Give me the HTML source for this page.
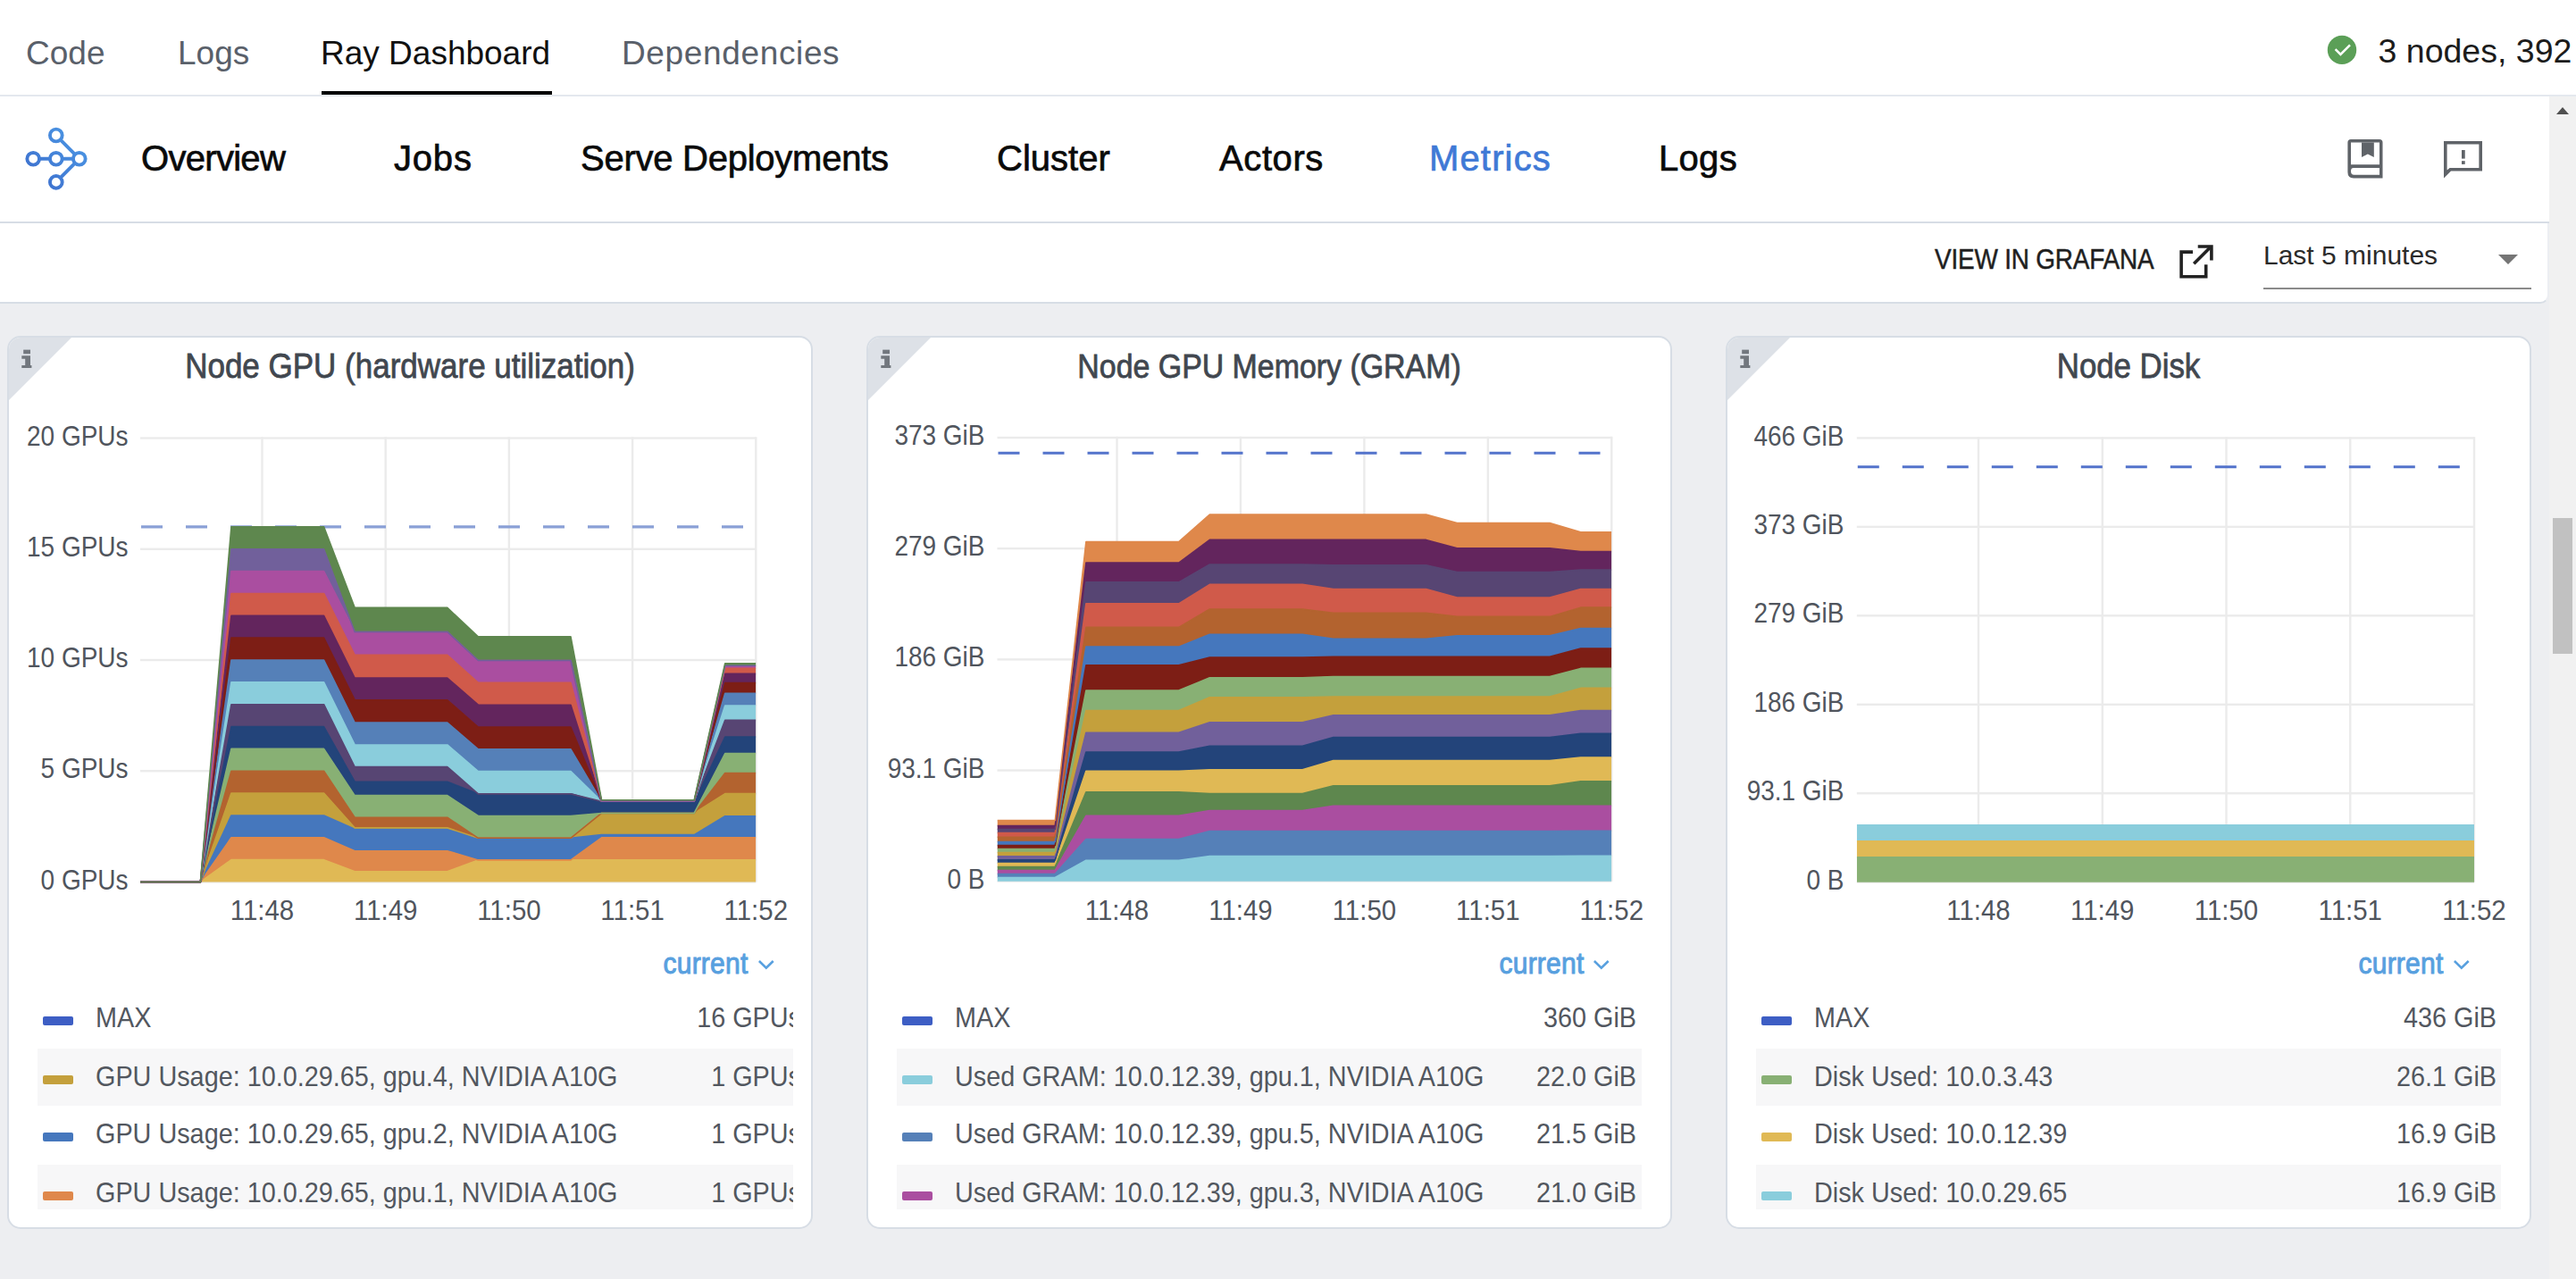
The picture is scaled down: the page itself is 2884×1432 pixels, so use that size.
<!DOCTYPE html>
<html><head><meta charset="utf-8"><style>
html,body{margin:0;padding:0;width:2884px;height:1432px;overflow:hidden;background:#fff;font-family:'Liberation Sans', sans-serif;}
</style></head><body>
<div style="position:absolute;left:0px;top:0px;width:2884px;height:106px;background:#ffffff;"></div>
<div style="position:absolute;left:0px;top:106px;width:2884px;height:2px;background:#e4e8ee;"></div>
<div style="position:absolute;left:0px;top:108px;width:2854px;height:1324px;background:#edeef1;"></div>
<div style="position:absolute;left:2854px;top:108px;width:30px;height:1324px;background:#f1f1f1;"></div>
<div style="position:absolute;left:2858px;top:580px;width:22px;height:152px;background:#c1c1c1;"></div>
<div style="position:absolute;left:2862px;top:120px;width:0;height:0;border-left:7px solid transparent;border-right:7px solid transparent;border-bottom:8px solid #505050"></div>
<div style="position:absolute;left:0px;top:108px;width:2854px;height:140px;background:#ffffff;"></div>
<div style="position:absolute;left:0px;top:248px;width:2854px;height:2px;background:#d7dde5;"></div>
<div style="position:absolute;left:-20px;top:230px;width:2870px;height:108px;background:#fff;border:2px solid #d7dde5;border-top:none;border-right-color:#eceef2;border-radius:0 0 10px 10px"></div>
<div style="position:absolute;left:0px;top:108px;width:2854px;height:140px;background:#ffffff;"></div>
<div style="position:absolute;left:0px;top:248px;width:2854px;height:2px;background:#d7dde5;"></div>
<div style="position:absolute;top:40.67px;font-size:37px;line-height:37px;color:#59606a;white-space:nowrap;font-weight:400;left:29.00px;transform-origin:0 0;">Code</div>
<div style="position:absolute;top:40.67px;font-size:37px;line-height:37px;color:#59606a;white-space:nowrap;font-weight:400;left:199.00px;transform-origin:0 0;">Logs</div>
<div style="position:absolute;top:40.67px;font-size:37px;line-height:37px;color:#111111;white-space:nowrap;font-weight:400;left:359.00px;transform-origin:0 0;">Ray Dashboard</div>
<div style="position:absolute;top:40.67px;font-size:37px;line-height:37px;color:#59606a;white-space:nowrap;font-weight:400;left:696.00px;transform-origin:0 0;letter-spacing:0.64px;">Dependencies</div>
<div style="position:absolute;left:360px;top:102px;width:258px;height:4px;background:#050505;"></div>
<svg style="position:absolute;left:2604px;top:38px" width="36" height="36" viewBox="0 0 36 36"><circle cx="18" cy="17.9" r="16.2" fill="#5b9f57"/><path d="M10.6 17.2 L16.4 22.9 L27 12.4" stroke="#fff" stroke-width="2.5" fill="none"/></svg>
<div style="position:absolute;top:38.75px;font-size:37.5px;line-height:37.5px;color:#1c1c1c;white-space:nowrap;font-weight:400;left:2662.50px;transform-origin:0 0;">3 nodes, 392</div>
<svg style="position:absolute;left:20px;top:130px" width="90" height="95" viewBox="20 130 90 95">
<defs><linearGradient id="lg" gradientUnits="userSpaceOnUse" x1="30" y1="210" x2="95" y2="145"><stop offset="0" stop-color="#3b6bcb"/><stop offset="1" stop-color="#4d9ae6"/></linearGradient></defs>
<g stroke="url(#lg)" stroke-width="3.9" fill="none">
<circle cx="62.8" cy="151.5" r="6.85"/><circle cx="37.2" cy="177.8" r="6.85"/><circle cx="62.8" cy="177.8" r="6.85"/><circle cx="88.8" cy="177.8" r="6.85"/><circle cx="62.8" cy="203.9" r="6.85"/>
<path d="M43.5 177.8 H56.5 M69.1 177.8 H82.5 M67.3 156.1 L84.2 173.2 M67.3 199.3 L84.2 182.4"/>
</g></svg>
<div style="position:absolute;top:157.13px;font-size:40px;line-height:40px;color:#0a0a0a;white-space:nowrap;font-weight:400;-webkit-text-stroke:0.7px #0a0a0a;left:158.00px;transform-origin:0 0;letter-spacing:-0.7px;">Overview</div>
<div style="position:absolute;top:157.13px;font-size:40px;line-height:40px;color:#0a0a0a;white-space:nowrap;font-weight:400;-webkit-text-stroke:0.7px #0a0a0a;left:441.00px;transform-origin:0 0;letter-spacing:0.8px;">Jobs</div>
<div style="position:absolute;top:157.13px;font-size:40px;line-height:40px;color:#0a0a0a;white-space:nowrap;font-weight:400;-webkit-text-stroke:0.7px #0a0a0a;left:650.00px;transform-origin:0 0;letter-spacing:-0.25px;">Serve Deployments</div>
<div style="position:absolute;top:157.13px;font-size:40px;line-height:40px;color:#0a0a0a;white-space:nowrap;font-weight:400;-webkit-text-stroke:0.7px #0a0a0a;left:1116.00px;transform-origin:0 0;">Cluster</div>
<div style="position:absolute;top:157.13px;font-size:40px;line-height:40px;color:#0a0a0a;white-space:nowrap;font-weight:400;-webkit-text-stroke:0.7px #0a0a0a;left:1365.00px;transform-origin:0 0;letter-spacing:0.6px;">Actors</div>
<div style="position:absolute;top:157.13px;font-size:40px;line-height:40px;color:#3f79d6;white-space:nowrap;font-weight:400;-webkit-text-stroke:0.7px #3f79d6;left:1600.00px;transform-origin:0 0;letter-spacing:1.15px;">Metrics</div>
<div style="position:absolute;top:157.13px;font-size:40px;line-height:40px;color:#0a0a0a;white-space:nowrap;font-weight:400;-webkit-text-stroke:0.7px #0a0a0a;left:1857.00px;transform-origin:0 0;letter-spacing:0.3px;">Logs</div>
<svg style="position:absolute;left:2620px;top:150px" width="60" height="56" viewBox="2620 150 60 56">
<g fill="#5f6368">
<path d="M2632 156 H2664 Q2667.5 156 2667.5 159.5 V199.4 H2635 Q2628.4 199.4 2628.4 192.8 V159.6 Q2628.4 156 2632 156 Z M2632 159.6 V184.2 H2664 V159.6 Z M2635 188 Q2632 188 2632 191.4 Q2632 195.8 2635.5 195.8 H2664 V188 Z" fill-rule="evenodd"/>
<path d="M2644 159.6 H2657.8 V176 L2650.9 172.4 L2644 176 Z"/>
</g></svg>
<svg style="position:absolute;left:2730px;top:150px" width="56" height="56" viewBox="2730 150 56 56">
<g fill="#5f6368">
<path d="M2736 158 H2779 V191.6 H2744 L2736 199.4 Z M2739.6 161.6 V190.6 L2742.6 188 H2775.4 V161.6 Z" fill-rule="evenodd"/>
<rect x="2756" y="168" width="3.7" height="9.6"/><rect x="2756" y="180.2" width="3.7" height="3.7"/>
</g></svg>
<div style="position:absolute;top:275.25px;font-size:31px;line-height:31px;color:#1f1f1f;white-space:nowrap;font-weight:400;-webkit-text-stroke:0.5px #1f1f1f;left:2166.00px;transform-origin:0 0;transform:scaleX(0.9);letter-spacing:-0.2px;">VIEW IN GRAFANA</div>
<svg style="position:absolute;left:2436px;top:270px" width="46" height="46" viewBox="2436 270 46 46">
<g stroke="#222" stroke-width="3.6" fill="none" stroke-linecap="butt">
<path d="M2455 282.1 H2442.1 V309.8 H2469.7 V296.3"/>
<path d="M2460.7 276 H2475.9 V291.5"/>
<path d="M2456.2 295.3 L2475.2 276.3"/>
</g></svg>
<div style="position:absolute;top:270.60px;font-size:30px;line-height:30px;color:#2b2b2b;white-space:nowrap;font-weight:400;left:2534.00px;transform-origin:0 0;">Last 5 minutes</div>
<div style="position:absolute;left:2534px;top:322px;width:300px;height:2px;background:#8a8a8a;"></div>
<div style="position:absolute;left:2797px;top:285px;width:0;height:0;border-left:11px solid transparent;border-right:11px solid transparent;border-top:11px solid #757575"></div>
<div style="position:absolute;left:8px;top:376px;width:898px;height:996px;background:#fff;border:2px solid #d7dde5;border-radius:15px;overflow:hidden"><div style="position:absolute;left:0;top:0;width:0;height:0;border-top:70px solid #dde1e7;border-right:70px solid transparent"></div></div>
<svg style="position:absolute;left:23px;top:388px" width="14" height="26" viewBox="0 0 14 26"><g fill="#72777e"><rect x="3.2" y="3.6" width="7.8" height="4.6"/><path d="M1.3 10.3 H11 V21 H12.4 V24 H1.3 V21 H5.2 V13.7 H1.3 Z"/></g></svg>
<div style="position:absolute;top:390.77px;font-size:38.888888888888886px;line-height:38.888888888888886px;color:#41474f;white-space:nowrap;font-weight:400;-webkit-text-stroke:0.8px #41474f;left:459.00px;transform-origin:50% 0;transform:translateX(-50%) scaleX(0.9);">Node GPU (hardware utilization)</div>
<div style="position:absolute;left:970px;top:376px;width:898px;height:996px;background:#fff;border:2px solid #d7dde5;border-radius:15px;overflow:hidden"><div style="position:absolute;left:0;top:0;width:0;height:0;border-top:70px solid #dde1e7;border-right:70px solid transparent"></div></div>
<svg style="position:absolute;left:985px;top:388px" width="14" height="26" viewBox="0 0 14 26"><g fill="#72777e"><rect x="3.2" y="3.6" width="7.8" height="4.6"/><path d="M1.3 10.3 H11 V21 H12.4 V24 H1.3 V21 H5.2 V13.7 H1.3 Z"/></g></svg>
<div style="position:absolute;top:391.81px;font-size:37.666666666666664px;line-height:37.666666666666664px;color:#41474f;white-space:nowrap;font-weight:400;-webkit-text-stroke:0.8px #41474f;left:1421.00px;transform-origin:50% 0;transform:translateX(-50%) scaleX(0.9);">Node GPU Memory (GRAM)</div>
<div style="position:absolute;left:1932px;top:376px;width:898px;height:996px;background:#fff;border:2px solid #d7dde5;border-radius:15px;overflow:hidden"><div style="position:absolute;left:0;top:0;width:0;height:0;border-top:70px solid #dde1e7;border-right:70px solid transparent"></div></div>
<svg style="position:absolute;left:1947px;top:388px" width="14" height="26" viewBox="0 0 14 26"><g fill="#72777e"><rect x="3.2" y="3.6" width="7.8" height="4.6"/><path d="M1.3 10.3 H11 V21 H12.4 V24 H1.3 V21 H5.2 V13.7 H1.3 Z"/></g></svg>
<div style="position:absolute;top:390.96px;font-size:38.666666666666664px;line-height:38.666666666666664px;color:#41474f;white-space:nowrap;font-weight:400;-webkit-text-stroke:0.8px #41474f;left:2383.00px;transform-origin:50% 0;transform:translateX(-50%) scaleX(0.9);">Node Disk</div>
<svg style="position:absolute;left:0;top:0" width="2884" height="1432" viewBox="0 0 2884 1432">
<g font-family="'Liberation Sans', sans-serif">
<rect x="157" y="986.30" width="689.30" height="2.4" fill="#ebebeb"/>
<rect x="157" y="862.05" width="689.30" height="2.4" fill="#ebebeb"/>
<rect x="157" y="737.80" width="689.30" height="2.4" fill="#ebebeb"/>
<rect x="157" y="613.55" width="689.30" height="2.4" fill="#ebebeb"/>
<rect x="157" y="489.30" width="689.30" height="2.4" fill="#ebebeb"/>
<rect x="292.30" y="489.3" width="2.4" height="498.20" fill="#ebebeb"/>
<rect x="430.50" y="489.3" width="2.4" height="498.20" fill="#ebebeb"/>
<rect x="568.70" y="489.3" width="2.4" height="498.20" fill="#ebebeb"/>
<rect x="706.90" y="489.3" width="2.4" height="498.20" fill="#ebebeb"/>
<rect x="845.10" y="489.3" width="2.4" height="498.20" fill="#ebebeb"/>
<text transform="translate(143.5 995.60) scale(0.903 1)" text-anchor="end" font-size="31" fill="#50555d">0 GPUs</text>
<text transform="translate(143.5 871.35) scale(0.903 1)" text-anchor="end" font-size="31" fill="#50555d">5 GPUs</text>
<text transform="translate(143.5 747.10) scale(0.903 1)" text-anchor="end" font-size="31" fill="#50555d">10 GPUs</text>
<text transform="translate(143.5 622.85) scale(0.903 1)" text-anchor="end" font-size="31" fill="#50555d">15 GPUs</text>
<text transform="translate(143.5 498.60) scale(0.903 1)" text-anchor="end" font-size="31" fill="#50555d">20 GPUs</text>
<text transform="translate(293.50 1029.8) scale(0.95 1)" text-anchor="middle" font-size="31" fill="#50555d">11:48</text>
<text transform="translate(431.70 1029.8) scale(0.95 1)" text-anchor="middle" font-size="31" fill="#50555d">11:49</text>
<text transform="translate(569.90 1029.8) scale(0.95 1)" text-anchor="middle" font-size="31" fill="#50555d">11:50</text>
<text transform="translate(708.10 1029.8) scale(0.95 1)" text-anchor="middle" font-size="31" fill="#50555d">11:51</text>
<text transform="translate(846.30 1029.8) scale(0.95 1)" text-anchor="middle" font-size="31" fill="#50555d">11:52</text>
<clipPath id="c1"><rect x="157" y="485.5" width="689.30" height="504.0"/></clipPath>
<line x1="158" y1="589.9" x2="846.3" y2="589.9" stroke="#8aa0d6" stroke-width="3.4" stroke-dasharray="24 26" clip-path="url(#c1)"/>
<g clip-path="url(#c1)">
<path d="M157.00 987.50 L224.40 987.50 L258.95 962.65 L293.50 962.65 L328.05 962.65 L362.60 962.65 L397.15 975.82 L431.70 975.82 L466.25 975.82 L500.80 975.82 L535.35 962.90 L569.90 962.90 L604.45 962.90 L639.00 962.90 L673.55 962.90 L708.10 962.90 L742.65 962.90 L777.20 962.90 L811.75 962.90 L846.30 962.90 L846.30 987.50 L811.75 987.50 L777.20 987.50 L742.65 987.50 L708.10 987.50 L673.55 987.50 L639.00 987.50 L604.45 987.50 L569.90 987.50 L535.35 987.50 L500.80 987.50 L466.25 987.50 L431.70 987.50 L397.15 987.50 L362.60 987.50 L328.05 987.50 L293.50 987.50 L258.95 987.50 L224.40 987.50 L157.00 987.50 Z" fill="#e0b955"/>
<path d="M157.00 987.50 L224.40 987.50 L258.95 937.80 L293.50 937.80 L328.05 937.80 L362.60 937.80 L397.15 952.71 L431.70 952.71 L466.25 952.71 L500.80 952.71 L535.35 962.90 L569.90 962.90 L604.45 962.90 L639.00 962.90 L673.55 937.80 L708.10 937.80 L742.65 937.80 L777.20 937.80 L811.75 937.80 L846.30 937.80 L846.30 962.90 L811.75 962.90 L777.20 962.90 L742.65 962.90 L708.10 962.90 L673.55 962.90 L639.00 962.90 L604.45 962.90 L569.90 962.90 L535.35 962.90 L500.80 975.82 L466.25 975.82 L431.70 975.82 L397.15 975.82 L362.60 962.65 L328.05 962.65 L293.50 962.65 L258.95 962.65 L224.40 987.50 L157.00 987.50 Z" fill="#df884b"/>
<path d="M157.00 987.50 L224.40 987.50 L258.95 912.95 L293.50 912.95 L328.05 912.95 L362.60 912.95 L397.15 928.11 L431.70 928.11 L466.25 928.11 L500.80 928.11 L535.35 938.30 L569.90 938.30 L604.45 938.30 L639.00 938.30 L673.55 934.57 L708.10 934.57 L742.65 934.57 L777.20 934.57 L811.75 913.70 L846.30 913.70 L846.30 937.80 L811.75 937.80 L777.20 937.80 L742.65 937.80 L708.10 937.80 L673.55 937.80 L639.00 962.90 L604.45 962.90 L569.90 962.90 L535.35 962.90 L500.80 952.71 L466.25 952.71 L431.70 952.71 L397.15 952.71 L362.60 937.80 L328.05 937.80 L293.50 937.80 L258.95 937.80 L224.40 987.50 L157.00 987.50 Z" fill="#4577bd"/>
<path d="M157.00 987.50 L224.40 987.50 L258.95 888.10 L293.50 888.10 L328.05 888.10 L362.60 888.10 L397.15 926.87 L431.70 926.87 L466.25 926.87 L500.80 926.87 L535.35 938.30 L569.90 938.30 L604.45 938.30 L639.00 938.30 L673.55 910.47 L708.10 910.47 L742.65 910.47 L777.20 910.47 L811.75 888.60 L846.30 888.60 L846.30 913.70 L811.75 913.70 L777.20 934.57 L742.65 934.57 L708.10 934.57 L673.55 934.57 L639.00 938.30 L604.45 938.30 L569.90 938.30 L535.35 938.30 L500.80 928.11 L466.25 928.11 L431.70 928.11 L397.15 928.11 L362.60 912.95 L328.05 912.95 L293.50 912.95 L258.95 912.95 L224.40 987.50 L157.00 987.50 Z" fill="#c4a03c"/>
<path d="M157.00 987.50 L224.40 987.50 L258.95 863.25 L293.50 863.25 L328.05 863.25 L362.60 863.25 L397.15 915.19 L431.70 915.19 L466.25 915.19 L500.80 915.19 L535.35 938.30 L569.90 938.30 L604.45 938.30 L639.00 938.30 L673.55 910.47 L708.10 910.47 L742.65 910.47 L777.20 910.47 L811.75 865.49 L846.30 865.49 L846.30 888.60 L811.75 888.60 L777.20 910.47 L742.65 910.47 L708.10 910.47 L673.55 910.47 L639.00 938.30 L604.45 938.30 L569.90 938.30 L535.35 938.30 L500.80 926.87 L466.25 926.87 L431.70 926.87 L397.15 926.87 L362.60 888.10 L328.05 888.10 L293.50 888.10 L258.95 888.10 L224.40 987.50 L157.00 987.50 Z" fill="#b3632f"/>
<path d="M157.00 987.50 L224.40 987.50 L258.95 838.40 L293.50 838.40 L328.05 838.40 L362.60 838.40 L397.15 890.59 L431.70 890.59 L466.25 890.59 L500.80 890.59 L535.35 913.45 L569.90 913.45 L604.45 913.45 L639.00 913.45 L673.55 910.47 L708.10 910.47 L742.65 910.47 L777.20 910.47 L811.75 843.62 L846.30 843.62 L846.30 865.49 L811.75 865.49 L777.20 910.47 L742.65 910.47 L708.10 910.47 L673.55 910.47 L639.00 938.30 L604.45 938.30 L569.90 938.30 L535.35 938.30 L500.80 915.19 L466.25 915.19 L431.70 915.19 L397.15 915.19 L362.60 863.25 L328.05 863.25 L293.50 863.25 L258.95 863.25 L224.40 987.50 L157.00 987.50 Z" fill="#88b074"/>
<path d="M157.00 987.50 L224.40 987.50 L258.95 813.55 L293.50 813.55 L328.05 813.55 L362.60 813.55 L397.15 875.18 L431.70 875.18 L466.25 875.18 L500.80 875.18 L535.35 888.85 L569.90 888.85 L604.45 888.85 L639.00 888.85 L673.55 898.54 L708.10 898.54 L742.65 898.54 L777.20 898.54 L811.75 824.98 L846.30 824.98 L846.30 843.62 L811.75 843.62 L777.20 910.47 L742.65 910.47 L708.10 910.47 L673.55 910.47 L639.00 913.45 L604.45 913.45 L569.90 913.45 L535.35 913.45 L500.80 890.59 L466.25 890.59 L431.70 890.59 L397.15 890.59 L362.60 838.40 L328.05 838.40 L293.50 838.40 L258.95 838.40 L224.40 987.50 L157.00 987.50 Z" fill="#23447a"/>
<path d="M157.00 987.50 L224.40 987.50 L258.95 788.70 L293.50 788.70 L328.05 788.70 L362.60 788.70 L397.15 858.53 L431.70 858.53 L466.25 858.53 L500.80 858.53 L535.35 888.85 L569.90 888.85 L604.45 888.85 L639.00 888.85 L673.55 897.29 L708.10 897.29 L742.65 897.29 L777.20 897.29 L811.75 806.34 L846.30 806.34 L846.30 824.98 L811.75 824.98 L777.20 898.54 L742.65 898.54 L708.10 898.54 L673.55 898.54 L639.00 888.85 L604.45 888.85 L569.90 888.85 L535.35 888.85 L500.80 875.18 L466.25 875.18 L431.70 875.18 L397.15 875.18 L362.60 813.55 L328.05 813.55 L293.50 813.55 L258.95 813.55 L224.40 987.50 L157.00 987.50 Z" fill="#574573"/>
<path d="M157.00 987.50 L224.40 987.50 L258.95 763.85 L293.50 763.85 L328.05 763.85 L362.60 763.85 L397.15 833.93 L431.70 833.93 L466.25 833.93 L500.80 833.93 L535.35 863.50 L569.90 863.50 L604.45 863.50 L639.00 863.50 L673.55 897.29 L708.10 897.29 L742.65 897.29 L777.20 897.29 L811.75 789.94 L846.30 789.94 L846.30 806.34 L811.75 806.34 L777.20 897.29 L742.65 897.29 L708.10 897.29 L673.55 897.29 L639.00 888.85 L604.45 888.85 L569.90 888.85 L535.35 888.85 L500.80 858.53 L466.25 858.53 L431.70 858.53 L397.15 858.53 L362.60 788.70 L328.05 788.70 L293.50 788.70 L258.95 788.70 L224.40 987.50 L157.00 987.50 Z" fill="#8acddc"/>
<path d="M157.00 987.50 L224.40 987.50 L258.95 739.00 L293.50 739.00 L328.05 739.00 L362.60 739.00 L397.15 809.08 L431.70 809.08 L466.25 809.08 L500.80 809.08 L535.35 838.90 L569.90 838.90 L604.45 838.90 L639.00 838.90 L673.55 897.29 L708.10 897.29 L742.65 897.29 L777.20 897.29 L811.75 776.27 L846.30 776.27 L846.30 789.94 L811.75 789.94 L777.20 897.29 L742.65 897.29 L708.10 897.29 L673.55 897.29 L639.00 863.50 L604.45 863.50 L569.90 863.50 L535.35 863.50 L500.80 833.93 L466.25 833.93 L431.70 833.93 L397.15 833.93 L362.60 763.85 L328.05 763.85 L293.50 763.85 L258.95 763.85 L224.40 987.50 L157.00 987.50 Z" fill="#5580b8"/>
<path d="M157.00 987.50 L224.40 987.50 L258.95 714.15 L293.50 714.15 L328.05 714.15 L362.60 714.15 L397.15 783.73 L431.70 783.73 L466.25 783.73 L500.80 783.73 L535.35 814.05 L569.90 814.05 L604.45 814.05 L639.00 814.05 L673.55 897.29 L708.10 897.29 L742.65 897.29 L777.20 897.29 L811.75 764.60 L846.30 764.60 L846.30 776.27 L811.75 776.27 L777.20 897.29 L742.65 897.29 L708.10 897.29 L673.55 897.29 L639.00 838.90 L604.45 838.90 L569.90 838.90 L535.35 838.90 L500.80 809.08 L466.25 809.08 L431.70 809.08 L397.15 809.08 L362.60 739.00 L328.05 739.00 L293.50 739.00 L258.95 739.00 L224.40 987.50 L157.00 987.50 Z" fill="#7d1e15"/>
<path d="M157.00 987.50 L224.40 987.50 L258.95 689.30 L293.50 689.30 L328.05 689.30 L362.60 689.30 L397.15 759.13 L431.70 759.13 L466.25 759.13 L500.80 759.13 L535.35 789.20 L569.90 789.20 L604.45 789.20 L639.00 789.20 L673.55 897.29 L708.10 897.29 L742.65 897.29 L777.20 897.29 L811.75 754.41 L846.30 754.41 L846.30 764.60 L811.75 764.60 L777.20 897.29 L742.65 897.29 L708.10 897.29 L673.55 897.29 L639.00 814.05 L604.45 814.05 L569.90 814.05 L535.35 814.05 L500.80 783.73 L466.25 783.73 L431.70 783.73 L397.15 783.73 L362.60 714.15 L328.05 714.15 L293.50 714.15 L258.95 714.15 L224.40 987.50 L157.00 987.50 Z" fill="#63255d"/>
<path d="M157.00 987.50 L224.40 987.50 L258.95 664.45 L293.50 664.45 L328.05 664.45 L362.60 664.45 L397.15 733.28 L431.70 733.28 L466.25 733.28 L500.80 733.28 L535.35 764.35 L569.90 764.35 L604.45 764.35 L639.00 764.35 L673.55 897.29 L708.10 897.29 L742.65 897.29 L777.20 897.29 L811.75 748.19 L846.30 748.19 L846.30 754.41 L811.75 754.41 L777.20 897.29 L742.65 897.29 L708.10 897.29 L673.55 897.29 L639.00 789.20 L604.45 789.20 L569.90 789.20 L535.35 789.20 L500.80 759.13 L466.25 759.13 L431.70 759.13 L397.15 759.13 L362.60 689.30 L328.05 689.30 L293.50 689.30 L258.95 689.30 L224.40 987.50 L157.00 987.50 Z" fill="#d05a4a"/>
<path d="M157.00 987.50 L224.40 987.50 L258.95 639.60 L293.50 639.60 L328.05 639.60 L362.60 639.60 L397.15 707.44 L431.70 707.44 L466.25 707.44 L500.80 707.44 L535.35 739.50 L569.90 739.50 L604.45 739.50 L639.00 739.50 L673.55 897.29 L708.10 897.29 L742.65 897.29 L777.20 897.29 L811.75 745.71 L846.30 745.71 L846.30 748.19 L811.75 748.19 L777.20 897.29 L742.65 897.29 L708.10 897.29 L673.55 897.29 L639.00 764.35 L604.45 764.35 L569.90 764.35 L535.35 764.35 L500.80 733.28 L466.25 733.28 L431.70 733.28 L397.15 733.28 L362.60 664.45 L328.05 664.45 L293.50 664.45 L258.95 664.45 L224.40 987.50 L157.00 987.50 Z" fill="#aa4ea0"/>
<path d="M157.00 987.50 L224.40 987.50 L258.95 614.75 L293.50 614.75 L328.05 614.75 L362.60 614.75 L397.15 707.44 L431.70 707.44 L466.25 707.44 L500.80 707.44 L535.35 739.50 L569.90 739.50 L604.45 739.50 L639.00 739.50 L673.55 896.80 L708.10 896.80 L742.65 896.80 L777.20 896.80 L811.75 745.21 L846.30 745.21 L846.30 745.71 L811.75 745.71 L777.20 897.29 L742.65 897.29 L708.10 897.29 L673.55 897.29 L639.00 739.50 L604.45 739.50 L569.90 739.50 L535.35 739.50 L500.80 707.44 L466.25 707.44 L431.70 707.44 L397.15 707.44 L362.60 639.60 L328.05 639.60 L293.50 639.60 L258.95 639.60 L224.40 987.50 L157.00 987.50 Z" fill="#71609b"/>
<path d="M157.00 987.50 L224.40 987.50 L258.95 589.90 L293.50 589.90 L328.05 589.90 L362.60 589.90 L397.15 680.35 L431.70 680.35 L466.25 680.35 L500.80 680.35 L535.35 712.91 L569.90 712.91 L604.45 712.91 L639.00 712.91 L673.55 895.80 L708.10 895.80 L742.65 895.80 L777.20 895.80 L811.75 742.73 L846.30 742.73 L846.30 745.21 L811.75 745.21 L777.20 896.80 L742.65 896.80 L708.10 896.80 L673.55 896.80 L639.00 739.50 L604.45 739.50 L569.90 739.50 L535.35 739.50 L500.80 707.44 L466.25 707.44 L431.70 707.44 L397.15 707.44 L362.60 614.75 L328.05 614.75 L293.50 614.75 L258.95 614.75 L224.40 987.50 L157.00 987.50 Z" fill="#5e874e"/>
<path d="M157.00 987.50 L224.40 987.50 L258.95 962.65 L293.50 962.65 L328.05 962.65 L362.60 962.65 L397.15 975.82 L431.70 975.82 L466.25 975.82 L500.80 975.82 L535.35 962.90 L569.90 962.90 L604.45 962.90 L639.00 962.90 L673.55 962.90 L708.10 962.90 L742.65 962.90 L777.20 962.90 L811.75 962.90 L846.30 962.90" fill="none" stroke="#e0b955" stroke-width="1.6" stroke-linejoin="round"/>
<path d="M157.00 987.50 L224.40 987.50 L258.95 937.80 L293.50 937.80 L328.05 937.80 L362.60 937.80 L397.15 952.71 L431.70 952.71 L466.25 952.71 L500.80 952.71 L535.35 962.90 L569.90 962.90 L604.45 962.90 L639.00 962.90 L673.55 937.80 L708.10 937.80 L742.65 937.80 L777.20 937.80 L811.75 937.80 L846.30 937.80" fill="none" stroke="#df884b" stroke-width="1.6" stroke-linejoin="round"/>
<path d="M157.00 987.50 L224.40 987.50 L258.95 912.95 L293.50 912.95 L328.05 912.95 L362.60 912.95 L397.15 928.11 L431.70 928.11 L466.25 928.11 L500.80 928.11 L535.35 938.30 L569.90 938.30 L604.45 938.30 L639.00 938.30 L673.55 934.57 L708.10 934.57 L742.65 934.57 L777.20 934.57 L811.75 913.70 L846.30 913.70" fill="none" stroke="#4577bd" stroke-width="1.6" stroke-linejoin="round"/>
<path d="M157.00 987.50 L224.40 987.50 L258.95 888.10 L293.50 888.10 L328.05 888.10 L362.60 888.10 L397.15 926.87 L431.70 926.87 L466.25 926.87 L500.80 926.87 L535.35 938.30 L569.90 938.30 L604.45 938.30 L639.00 938.30 L673.55 910.47 L708.10 910.47 L742.65 910.47 L777.20 910.47 L811.75 888.60 L846.30 888.60" fill="none" stroke="#c4a03c" stroke-width="1.6" stroke-linejoin="round"/>
<path d="M157.00 987.50 L224.40 987.50 L258.95 863.25 L293.50 863.25 L328.05 863.25 L362.60 863.25 L397.15 915.19 L431.70 915.19 L466.25 915.19 L500.80 915.19 L535.35 938.30 L569.90 938.30 L604.45 938.30 L639.00 938.30 L673.55 910.47 L708.10 910.47 L742.65 910.47 L777.20 910.47 L811.75 865.49 L846.30 865.49" fill="none" stroke="#b3632f" stroke-width="1.6" stroke-linejoin="round"/>
<path d="M157.00 987.50 L224.40 987.50 L258.95 838.40 L293.50 838.40 L328.05 838.40 L362.60 838.40 L397.15 890.59 L431.70 890.59 L466.25 890.59 L500.80 890.59 L535.35 913.45 L569.90 913.45 L604.45 913.45 L639.00 913.45 L673.55 910.47 L708.10 910.47 L742.65 910.47 L777.20 910.47 L811.75 843.62 L846.30 843.62" fill="none" stroke="#88b074" stroke-width="1.6" stroke-linejoin="round"/>
<path d="M157.00 987.50 L224.40 987.50 L258.95 813.55 L293.50 813.55 L328.05 813.55 L362.60 813.55 L397.15 875.18 L431.70 875.18 L466.25 875.18 L500.80 875.18 L535.35 888.85 L569.90 888.85 L604.45 888.85 L639.00 888.85 L673.55 898.54 L708.10 898.54 L742.65 898.54 L777.20 898.54 L811.75 824.98 L846.30 824.98" fill="none" stroke="#23447a" stroke-width="1.6" stroke-linejoin="round"/>
<path d="M157.00 987.50 L224.40 987.50 L258.95 788.70 L293.50 788.70 L328.05 788.70 L362.60 788.70 L397.15 858.53 L431.70 858.53 L466.25 858.53 L500.80 858.53 L535.35 888.85 L569.90 888.85 L604.45 888.85 L639.00 888.85 L673.55 897.29 L708.10 897.29 L742.65 897.29 L777.20 897.29 L811.75 806.34 L846.30 806.34" fill="none" stroke="#574573" stroke-width="1.6" stroke-linejoin="round"/>
<path d="M157.00 987.50 L224.40 987.50 L258.95 763.85 L293.50 763.85 L328.05 763.85 L362.60 763.85 L397.15 833.93 L431.70 833.93 L466.25 833.93 L500.80 833.93 L535.35 863.50 L569.90 863.50 L604.45 863.50 L639.00 863.50 L673.55 897.29 L708.10 897.29 L742.65 897.29 L777.20 897.29 L811.75 789.94 L846.30 789.94" fill="none" stroke="#8acddc" stroke-width="1.6" stroke-linejoin="round"/>
<path d="M157.00 987.50 L224.40 987.50 L258.95 739.00 L293.50 739.00 L328.05 739.00 L362.60 739.00 L397.15 809.08 L431.70 809.08 L466.25 809.08 L500.80 809.08 L535.35 838.90 L569.90 838.90 L604.45 838.90 L639.00 838.90 L673.55 897.29 L708.10 897.29 L742.65 897.29 L777.20 897.29 L811.75 776.27 L846.30 776.27" fill="none" stroke="#5580b8" stroke-width="1.6" stroke-linejoin="round"/>
<path d="M157.00 987.50 L224.40 987.50 L258.95 714.15 L293.50 714.15 L328.05 714.15 L362.60 714.15 L397.15 783.73 L431.70 783.73 L466.25 783.73 L500.80 783.73 L535.35 814.05 L569.90 814.05 L604.45 814.05 L639.00 814.05 L673.55 897.29 L708.10 897.29 L742.65 897.29 L777.20 897.29 L811.75 764.60 L846.30 764.60" fill="none" stroke="#7d1e15" stroke-width="1.6" stroke-linejoin="round"/>
<path d="M157.00 987.50 L224.40 987.50 L258.95 689.30 L293.50 689.30 L328.05 689.30 L362.60 689.30 L397.15 759.13 L431.70 759.13 L466.25 759.13 L500.80 759.13 L535.35 789.20 L569.90 789.20 L604.45 789.20 L639.00 789.20 L673.55 897.29 L708.10 897.29 L742.65 897.29 L777.20 897.29 L811.75 754.41 L846.30 754.41" fill="none" stroke="#63255d" stroke-width="1.6" stroke-linejoin="round"/>
<path d="M157.00 987.50 L224.40 987.50 L258.95 664.45 L293.50 664.45 L328.05 664.45 L362.60 664.45 L397.15 733.28 L431.70 733.28 L466.25 733.28 L500.80 733.28 L535.35 764.35 L569.90 764.35 L604.45 764.35 L639.00 764.35 L673.55 897.29 L708.10 897.29 L742.65 897.29 L777.20 897.29 L811.75 748.19 L846.30 748.19" fill="none" stroke="#d05a4a" stroke-width="1.6" stroke-linejoin="round"/>
<path d="M157.00 987.50 L224.40 987.50 L258.95 639.60 L293.50 639.60 L328.05 639.60 L362.60 639.60 L397.15 707.44 L431.70 707.44 L466.25 707.44 L500.80 707.44 L535.35 739.50 L569.90 739.50 L604.45 739.50 L639.00 739.50 L673.55 897.29 L708.10 897.29 L742.65 897.29 L777.20 897.29 L811.75 745.71 L846.30 745.71" fill="none" stroke="#aa4ea0" stroke-width="1.6" stroke-linejoin="round"/>
<path d="M157.00 987.50 L224.40 987.50 L258.95 614.75 L293.50 614.75 L328.05 614.75 L362.60 614.75 L397.15 707.44 L431.70 707.44 L466.25 707.44 L500.80 707.44 L535.35 739.50 L569.90 739.50 L604.45 739.50 L639.00 739.50 L673.55 896.80 L708.10 896.80 L742.65 896.80 L777.20 896.80 L811.75 745.21 L846.30 745.21" fill="none" stroke="#71609b" stroke-width="1.6" stroke-linejoin="round"/>
<path d="M157.00 987.50 L224.40 987.50 L258.95 589.90 L293.50 589.90 L328.05 589.90 L362.60 589.90 L397.15 680.35 L431.70 680.35 L466.25 680.35 L500.80 680.35 L535.35 712.91 L569.90 712.91 L604.45 712.91 L639.00 712.91 L673.55 895.80 L708.10 895.80 L742.65 895.80 L777.20 895.80 L811.75 742.73 L846.30 742.73" fill="none" stroke="#5e874e" stroke-width="1.6" stroke-linejoin="round"/>
</g>
<rect x="1116.5" y="985.50" width="687.80" height="2.4" fill="#ebebeb"/>
<rect x="1116.5" y="861.33" width="687.80" height="2.4" fill="#ebebeb"/>
<rect x="1116.5" y="737.15" width="687.80" height="2.4" fill="#ebebeb"/>
<rect x="1116.5" y="612.97" width="687.80" height="2.4" fill="#ebebeb"/>
<rect x="1116.5" y="488.80" width="687.80" height="2.4" fill="#ebebeb"/>
<rect x="1249.30" y="488.8" width="2.4" height="497.90" fill="#ebebeb"/>
<rect x="1387.75" y="488.8" width="2.4" height="497.90" fill="#ebebeb"/>
<rect x="1526.20" y="488.8" width="2.4" height="497.90" fill="#ebebeb"/>
<rect x="1664.65" y="488.8" width="2.4" height="497.90" fill="#ebebeb"/>
<rect x="1803.10" y="488.8" width="2.4" height="497.90" fill="#ebebeb"/>
<text transform="translate(1102.5 994.80) scale(0.903 1)" text-anchor="end" font-size="31" fill="#50555d">0 B</text>
<text transform="translate(1102.5 870.63) scale(0.903 1)" text-anchor="end" font-size="31" fill="#50555d">93.1 GiB</text>
<text transform="translate(1102.5 746.45) scale(0.903 1)" text-anchor="end" font-size="31" fill="#50555d">186 GiB</text>
<text transform="translate(1102.5 622.27) scale(0.903 1)" text-anchor="end" font-size="31" fill="#50555d">279 GiB</text>
<text transform="translate(1102.5 498.10) scale(0.903 1)" text-anchor="end" font-size="31" fill="#50555d">373 GiB</text>
<text transform="translate(1250.50 1029.8) scale(0.95 1)" text-anchor="middle" font-size="31" fill="#50555d">11:48</text>
<text transform="translate(1388.95 1029.8) scale(0.95 1)" text-anchor="middle" font-size="31" fill="#50555d">11:49</text>
<text transform="translate(1527.40 1029.8) scale(0.95 1)" text-anchor="middle" font-size="31" fill="#50555d">11:50</text>
<text transform="translate(1665.85 1029.8) scale(0.95 1)" text-anchor="middle" font-size="31" fill="#50555d">11:51</text>
<text transform="translate(1804.30 1029.8) scale(0.95 1)" text-anchor="middle" font-size="31" fill="#50555d">11:52</text>
<clipPath id="c2"><rect x="1116.5" y="485" width="687.80" height="503.70000000000005"/></clipPath>
<g clip-path="url(#c2)">
<path d="M1116.50 982.43 L1181.28 982.43 L1215.89 963.23 L1250.50 963.23 L1285.11 963.23 L1319.72 963.23 L1354.33 958.43 L1388.94 958.43 L1423.55 958.43 L1458.16 958.43 L1492.77 958.43 L1527.38 958.43 L1561.99 958.43 L1596.60 958.43 L1631.21 958.43 L1665.82 958.43 L1700.43 958.43 L1735.04 958.43 L1769.65 958.30 L1804.26 958.30 L1804.26 986.70 L1769.65 986.70 L1735.04 986.70 L1700.43 986.70 L1665.82 986.70 L1631.21 986.70 L1596.60 986.70 L1561.99 986.70 L1527.38 986.70 L1492.77 986.70 L1458.16 986.70 L1423.55 986.70 L1388.94 986.70 L1354.33 986.70 L1319.72 986.70 L1285.11 986.70 L1250.50 986.70 L1215.89 986.70 L1181.28 986.70 L1116.50 986.70 Z" fill="#8acddc"/>
<path d="M1116.50 978.43 L1181.28 978.43 L1215.89 939.50 L1250.50 939.50 L1285.11 939.50 L1319.72 939.50 L1354.33 930.56 L1388.94 930.56 L1423.55 930.56 L1458.16 930.56 L1492.77 930.56 L1527.38 930.56 L1561.99 930.56 L1596.60 930.56 L1631.21 930.56 L1665.82 930.56 L1700.43 930.56 L1735.04 930.56 L1769.65 930.30 L1804.26 930.30 L1804.26 958.30 L1769.65 958.30 L1735.04 958.43 L1700.43 958.43 L1665.82 958.43 L1631.21 958.43 L1596.60 958.43 L1561.99 958.43 L1527.38 958.43 L1492.77 958.43 L1458.16 958.43 L1423.55 958.43 L1388.94 958.43 L1354.33 958.43 L1319.72 963.23 L1285.11 963.23 L1250.50 963.23 L1215.89 963.23 L1181.28 982.43 L1116.50 982.43 Z" fill="#5580b8"/>
<path d="M1116.50 974.43 L1181.28 974.43 L1215.89 913.36 L1250.50 913.36 L1285.11 913.36 L1319.72 913.36 L1354.33 907.49 L1388.94 907.49 L1423.55 907.49 L1458.16 907.49 L1492.77 902.29 L1527.38 902.29 L1561.99 902.29 L1596.60 902.29 L1631.21 902.29 L1665.82 902.29 L1700.43 902.29 L1735.04 902.29 L1769.65 902.29 L1804.26 902.29 L1804.26 930.30 L1769.65 930.30 L1735.04 930.56 L1700.43 930.56 L1665.82 930.56 L1631.21 930.56 L1596.60 930.56 L1561.99 930.56 L1527.38 930.56 L1492.77 930.56 L1458.16 930.56 L1423.55 930.56 L1388.94 930.56 L1354.33 930.56 L1319.72 939.50 L1285.11 939.50 L1250.50 939.50 L1215.89 939.50 L1181.28 978.43 L1116.50 978.43 Z" fill="#aa4ea0"/>
<path d="M1116.50 970.43 L1181.28 970.43 L1215.89 886.83 L1250.50 886.83 L1285.11 886.83 L1319.72 886.83 L1354.33 888.56 L1388.94 888.56 L1423.55 888.56 L1458.16 888.56 L1492.77 879.89 L1527.38 879.89 L1561.99 879.89 L1596.60 879.89 L1631.21 879.89 L1665.82 879.89 L1700.43 879.89 L1735.04 879.89 L1769.65 874.69 L1804.26 874.69 L1804.26 902.29 L1769.65 902.29 L1735.04 902.29 L1700.43 902.29 L1665.82 902.29 L1631.21 902.29 L1596.60 902.29 L1561.99 902.29 L1527.38 902.29 L1492.77 902.29 L1458.16 907.49 L1423.55 907.49 L1388.94 907.49 L1354.33 907.49 L1319.72 913.36 L1285.11 913.36 L1250.50 913.36 L1215.89 913.36 L1181.28 974.43 L1116.50 974.43 Z" fill="#5e874e"/>
<path d="M1116.50 966.43 L1181.28 966.43 L1215.89 863.36 L1250.50 863.36 L1285.11 863.36 L1319.72 863.36 L1354.33 861.76 L1388.94 861.76 L1423.55 861.76 L1458.16 861.76 L1492.77 851.62 L1527.38 851.62 L1561.99 851.62 L1596.60 851.62 L1631.21 851.62 L1665.82 851.62 L1700.43 851.62 L1735.04 851.62 L1769.65 848.16 L1804.26 848.16 L1804.26 874.69 L1769.65 874.69 L1735.04 879.89 L1700.43 879.89 L1665.82 879.89 L1631.21 879.89 L1596.60 879.89 L1561.99 879.89 L1527.38 879.89 L1492.77 879.89 L1458.16 888.56 L1423.55 888.56 L1388.94 888.56 L1354.33 888.56 L1319.72 886.83 L1285.11 886.83 L1250.50 886.83 L1215.89 886.83 L1181.28 970.43 L1116.50 970.43 Z" fill="#e0b955"/>
<path d="M1116.50 962.83 L1181.28 962.83 L1215.89 842.02 L1250.50 842.02 L1285.11 842.02 L1319.72 842.02 L1354.33 835.22 L1388.94 835.22 L1423.55 835.22 L1458.16 835.22 L1492.77 825.49 L1527.38 825.49 L1561.99 825.49 L1596.60 825.49 L1631.21 825.49 L1665.82 825.49 L1700.43 825.49 L1735.04 825.49 L1769.65 821.36 L1804.26 821.36 L1804.26 848.16 L1769.65 848.16 L1735.04 851.62 L1700.43 851.62 L1665.82 851.62 L1631.21 851.62 L1596.60 851.62 L1561.99 851.62 L1527.38 851.62 L1492.77 851.62 L1458.16 861.76 L1423.55 861.76 L1388.94 861.76 L1354.33 861.76 L1319.72 863.36 L1285.11 863.36 L1250.50 863.36 L1215.89 863.36 L1181.28 966.43 L1116.50 966.43 Z" fill="#23447a"/>
<path d="M1116.50 958.83 L1181.28 958.83 L1215.89 820.29 L1250.50 820.29 L1285.11 820.29 L1319.72 820.29 L1354.33 808.69 L1388.94 808.69 L1423.55 808.69 L1458.16 808.69 L1492.77 800.69 L1527.38 800.69 L1561.99 800.69 L1596.60 800.69 L1631.21 800.69 L1665.82 800.69 L1700.43 800.69 L1735.04 800.69 L1769.65 795.49 L1804.26 795.49 L1804.26 821.36 L1769.65 821.36 L1735.04 825.49 L1700.43 825.49 L1665.82 825.49 L1631.21 825.49 L1596.60 825.49 L1561.99 825.49 L1527.38 825.49 L1492.77 825.49 L1458.16 835.22 L1423.55 835.22 L1388.94 835.22 L1354.33 835.22 L1319.72 842.02 L1285.11 842.02 L1250.50 842.02 L1215.89 842.02 L1181.28 962.83 L1116.50 962.83 Z" fill="#71609b"/>
<path d="M1116.50 954.56 L1181.28 954.56 L1215.89 795.49 L1250.50 795.49 L1285.11 795.49 L1319.72 795.49 L1354.33 780.82 L1388.94 780.82 L1423.55 780.82 L1458.16 780.82 L1492.77 780.02 L1527.38 780.02 L1561.99 780.02 L1596.60 780.02 L1631.21 780.02 L1665.82 780.02 L1700.43 780.02 L1735.04 780.02 L1769.65 770.42 L1804.26 770.42 L1804.26 795.49 L1769.65 795.49 L1735.04 800.69 L1700.43 800.69 L1665.82 800.69 L1631.21 800.69 L1596.60 800.69 L1561.99 800.69 L1527.38 800.69 L1492.77 800.69 L1458.16 808.69 L1423.55 808.69 L1388.94 808.69 L1354.33 808.69 L1319.72 820.29 L1285.11 820.29 L1250.50 820.29 L1215.89 820.29 L1181.28 958.83 L1116.50 958.83 Z" fill="#c4a03c"/>
<path d="M1116.50 950.56 L1181.28 950.56 L1215.89 773.09 L1250.50 773.09 L1285.11 773.09 L1319.72 773.09 L1354.33 758.82 L1388.94 758.82 L1423.55 758.82 L1458.16 758.82 L1492.77 757.62 L1527.38 757.62 L1561.99 757.62 L1596.60 757.62 L1631.21 757.62 L1665.82 757.62 L1700.43 757.62 L1735.04 757.62 L1769.65 748.42 L1804.26 748.42 L1804.26 770.42 L1769.65 770.42 L1735.04 780.02 L1700.43 780.02 L1665.82 780.02 L1631.21 780.02 L1596.60 780.02 L1561.99 780.02 L1527.38 780.02 L1492.77 780.02 L1458.16 780.82 L1423.55 780.82 L1388.94 780.82 L1354.33 780.82 L1319.72 795.49 L1285.11 795.49 L1250.50 795.49 L1215.89 795.49 L1181.28 954.56 L1116.50 954.56 Z" fill="#88b074"/>
<path d="M1116.50 946.56 L1181.28 946.56 L1215.89 744.82 L1250.50 744.82 L1285.11 744.82 L1319.72 744.82 L1354.33 736.15 L1388.94 736.15 L1423.55 736.15 L1458.16 736.15 L1492.77 735.22 L1527.38 735.22 L1561.99 735.22 L1596.60 735.22 L1631.21 735.22 L1665.82 735.22 L1700.43 735.22 L1735.04 735.22 L1769.65 726.02 L1804.26 726.02 L1804.26 748.42 L1769.65 748.42 L1735.04 757.62 L1700.43 757.62 L1665.82 757.62 L1631.21 757.62 L1596.60 757.62 L1561.99 757.62 L1527.38 757.62 L1492.77 757.62 L1458.16 758.82 L1423.55 758.82 L1388.94 758.82 L1354.33 758.82 L1319.72 773.09 L1285.11 773.09 L1250.50 773.09 L1215.89 773.09 L1181.28 950.56 L1116.50 950.56 Z" fill="#7d1e15"/>
<path d="M1116.50 942.56 L1181.28 942.56 L1215.89 724.15 L1250.50 724.15 L1285.11 724.15 L1319.72 724.15 L1354.33 710.28 L1388.94 710.28 L1423.55 710.28 L1458.16 710.28 L1492.77 715.22 L1527.38 715.22 L1561.99 715.22 L1596.60 715.22 L1631.21 711.75 L1665.82 711.75 L1700.43 711.75 L1735.04 711.75 L1769.65 703.61 L1804.26 703.61 L1804.26 726.02 L1769.65 726.02 L1735.04 735.22 L1700.43 735.22 L1665.82 735.22 L1631.21 735.22 L1596.60 735.22 L1561.99 735.22 L1527.38 735.22 L1492.77 735.22 L1458.16 736.15 L1423.55 736.15 L1388.94 736.15 L1354.33 736.15 L1319.72 744.82 L1285.11 744.82 L1250.50 744.82 L1215.89 744.82 L1181.28 946.56 L1116.50 946.56 Z" fill="#4577bd"/>
<path d="M1116.50 937.23 L1181.28 937.23 L1215.89 702.41 L1250.50 702.41 L1285.11 702.41 L1319.72 702.41 L1354.33 682.01 L1388.94 682.01 L1423.55 682.01 L1458.16 682.01 L1492.77 686.28 L1527.38 686.28 L1561.99 686.28 L1596.60 686.28 L1631.21 690.41 L1665.82 690.41 L1700.43 690.41 L1735.04 690.41 L1769.65 680.15 L1804.26 680.15 L1804.26 703.61 L1769.65 703.61 L1735.04 711.75 L1700.43 711.75 L1665.82 711.75 L1631.21 711.75 L1596.60 715.22 L1561.99 715.22 L1527.38 715.22 L1492.77 715.22 L1458.16 710.28 L1423.55 710.28 L1388.94 710.28 L1354.33 710.28 L1319.72 724.15 L1285.11 724.15 L1250.50 724.15 L1215.89 724.15 L1181.28 942.56 L1116.50 942.56 Z" fill="#b3632f"/>
<path d="M1116.50 932.56 L1181.28 932.56 L1215.89 675.88 L1250.50 675.88 L1285.11 675.88 L1319.72 675.88 L1354.33 654.41 L1388.94 654.41 L1423.55 654.41 L1458.16 654.41 L1492.77 659.48 L1527.38 659.48 L1561.99 659.48 L1596.60 659.48 L1631.21 669.08 L1665.82 669.08 L1700.43 669.08 L1735.04 669.08 L1769.65 659.48 L1804.26 659.48 L1804.26 680.15 L1769.65 680.15 L1735.04 690.41 L1700.43 690.41 L1665.82 690.41 L1631.21 690.41 L1596.60 686.28 L1561.99 686.28 L1527.38 686.28 L1492.77 686.28 L1458.16 682.01 L1423.55 682.01 L1388.94 682.01 L1354.33 682.01 L1319.72 702.41 L1285.11 702.41 L1250.50 702.41 L1215.89 702.41 L1181.28 937.23 L1116.50 937.23 Z" fill="#d05a4a"/>
<path d="M1116.50 928.56 L1181.28 928.56 L1215.89 651.88 L1250.50 651.88 L1285.11 651.88 L1319.72 651.88 L1354.33 632.01 L1388.94 632.01 L1423.55 632.01 L1458.16 632.01 L1492.77 632.68 L1527.38 632.68 L1561.99 632.68 L1596.60 632.68 L1631.21 640.54 L1665.82 640.54 L1700.43 640.54 L1735.04 640.54 L1769.65 638.14 L1804.26 638.14 L1804.26 659.48 L1769.65 659.48 L1735.04 669.08 L1700.43 669.08 L1665.82 669.08 L1631.21 669.08 L1596.60 659.48 L1561.99 659.48 L1527.38 659.48 L1492.77 659.48 L1458.16 654.41 L1423.55 654.41 L1388.94 654.41 L1354.33 654.41 L1319.72 675.88 L1285.11 675.88 L1250.50 675.88 L1215.89 675.88 L1181.28 932.56 L1116.50 932.56 Z" fill="#574573"/>
<path d="M1116.50 924.56 L1181.28 924.56 L1215.89 630.14 L1250.50 630.14 L1285.11 630.14 L1319.72 630.14 L1354.33 604.41 L1388.94 604.41 L1423.55 604.41 L1458.16 604.41 L1492.77 604.41 L1527.38 604.41 L1561.99 604.41 L1596.60 604.41 L1631.21 613.74 L1665.82 613.74 L1700.43 613.74 L1735.04 613.74 L1769.65 617.48 L1804.26 617.48 L1804.26 638.14 L1769.65 638.14 L1735.04 640.54 L1700.43 640.54 L1665.82 640.54 L1631.21 640.54 L1596.60 632.68 L1561.99 632.68 L1527.38 632.68 L1492.77 632.68 L1458.16 632.01 L1423.55 632.01 L1388.94 632.01 L1354.33 632.01 L1319.72 651.88 L1285.11 651.88 L1250.50 651.88 L1215.89 651.88 L1181.28 928.56 L1116.50 928.56 Z" fill="#63255d"/>
<path d="M1116.50 918.56 L1181.28 918.56 L1215.89 606.67 L1250.50 606.67 L1285.11 606.67 L1319.72 606.67 L1354.33 576.14 L1388.94 576.14 L1423.55 576.14 L1458.16 576.14 L1492.77 576.14 L1527.38 576.14 L1561.99 576.14 L1596.60 576.14 L1631.21 585.47 L1665.82 585.47 L1700.43 585.47 L1735.04 585.47 L1769.65 595.74 L1804.26 595.74 L1804.26 617.48 L1769.65 617.48 L1735.04 613.74 L1700.43 613.74 L1665.82 613.74 L1631.21 613.74 L1596.60 604.41 L1561.99 604.41 L1527.38 604.41 L1492.77 604.41 L1458.16 604.41 L1423.55 604.41 L1388.94 604.41 L1354.33 604.41 L1319.72 630.14 L1285.11 630.14 L1250.50 630.14 L1215.89 630.14 L1181.28 924.56 L1116.50 924.56 Z" fill="#df884b"/>
<path d="M1116.50 982.43 L1181.28 982.43 L1215.89 963.23 L1250.50 963.23 L1285.11 963.23 L1319.72 963.23 L1354.33 958.43 L1388.94 958.43 L1423.55 958.43 L1458.16 958.43 L1492.77 958.43 L1527.38 958.43 L1561.99 958.43 L1596.60 958.43 L1631.21 958.43 L1665.82 958.43 L1700.43 958.43 L1735.04 958.43 L1769.65 958.30 L1804.26 958.30" fill="none" stroke="#8acddc" stroke-width="1.6" stroke-linejoin="round"/>
<path d="M1116.50 978.43 L1181.28 978.43 L1215.89 939.50 L1250.50 939.50 L1285.11 939.50 L1319.72 939.50 L1354.33 930.56 L1388.94 930.56 L1423.55 930.56 L1458.16 930.56 L1492.77 930.56 L1527.38 930.56 L1561.99 930.56 L1596.60 930.56 L1631.21 930.56 L1665.82 930.56 L1700.43 930.56 L1735.04 930.56 L1769.65 930.30 L1804.26 930.30" fill="none" stroke="#5580b8" stroke-width="1.6" stroke-linejoin="round"/>
<path d="M1116.50 974.43 L1181.28 974.43 L1215.89 913.36 L1250.50 913.36 L1285.11 913.36 L1319.72 913.36 L1354.33 907.49 L1388.94 907.49 L1423.55 907.49 L1458.16 907.49 L1492.77 902.29 L1527.38 902.29 L1561.99 902.29 L1596.60 902.29 L1631.21 902.29 L1665.82 902.29 L1700.43 902.29 L1735.04 902.29 L1769.65 902.29 L1804.26 902.29" fill="none" stroke="#aa4ea0" stroke-width="1.6" stroke-linejoin="round"/>
<path d="M1116.50 970.43 L1181.28 970.43 L1215.89 886.83 L1250.50 886.83 L1285.11 886.83 L1319.72 886.83 L1354.33 888.56 L1388.94 888.56 L1423.55 888.56 L1458.16 888.56 L1492.77 879.89 L1527.38 879.89 L1561.99 879.89 L1596.60 879.89 L1631.21 879.89 L1665.82 879.89 L1700.43 879.89 L1735.04 879.89 L1769.65 874.69 L1804.26 874.69" fill="none" stroke="#5e874e" stroke-width="1.6" stroke-linejoin="round"/>
<path d="M1116.50 966.43 L1181.28 966.43 L1215.89 863.36 L1250.50 863.36 L1285.11 863.36 L1319.72 863.36 L1354.33 861.76 L1388.94 861.76 L1423.55 861.76 L1458.16 861.76 L1492.77 851.62 L1527.38 851.62 L1561.99 851.62 L1596.60 851.62 L1631.21 851.62 L1665.82 851.62 L1700.43 851.62 L1735.04 851.62 L1769.65 848.16 L1804.26 848.16" fill="none" stroke="#e0b955" stroke-width="1.6" stroke-linejoin="round"/>
<path d="M1116.50 962.83 L1181.28 962.83 L1215.89 842.02 L1250.50 842.02 L1285.11 842.02 L1319.72 842.02 L1354.33 835.22 L1388.94 835.22 L1423.55 835.22 L1458.16 835.22 L1492.77 825.49 L1527.38 825.49 L1561.99 825.49 L1596.60 825.49 L1631.21 825.49 L1665.82 825.49 L1700.43 825.49 L1735.04 825.49 L1769.65 821.36 L1804.26 821.36" fill="none" stroke="#23447a" stroke-width="1.6" stroke-linejoin="round"/>
<path d="M1116.50 958.83 L1181.28 958.83 L1215.89 820.29 L1250.50 820.29 L1285.11 820.29 L1319.72 820.29 L1354.33 808.69 L1388.94 808.69 L1423.55 808.69 L1458.16 808.69 L1492.77 800.69 L1527.38 800.69 L1561.99 800.69 L1596.60 800.69 L1631.21 800.69 L1665.82 800.69 L1700.43 800.69 L1735.04 800.69 L1769.65 795.49 L1804.26 795.49" fill="none" stroke="#71609b" stroke-width="1.6" stroke-linejoin="round"/>
<path d="M1116.50 954.56 L1181.28 954.56 L1215.89 795.49 L1250.50 795.49 L1285.11 795.49 L1319.72 795.49 L1354.33 780.82 L1388.94 780.82 L1423.55 780.82 L1458.16 780.82 L1492.77 780.02 L1527.38 780.02 L1561.99 780.02 L1596.60 780.02 L1631.21 780.02 L1665.82 780.02 L1700.43 780.02 L1735.04 780.02 L1769.65 770.42 L1804.26 770.42" fill="none" stroke="#c4a03c" stroke-width="1.6" stroke-linejoin="round"/>
<path d="M1116.50 950.56 L1181.28 950.56 L1215.89 773.09 L1250.50 773.09 L1285.11 773.09 L1319.72 773.09 L1354.33 758.82 L1388.94 758.82 L1423.55 758.82 L1458.16 758.82 L1492.77 757.62 L1527.38 757.62 L1561.99 757.62 L1596.60 757.62 L1631.21 757.62 L1665.82 757.62 L1700.43 757.62 L1735.04 757.62 L1769.65 748.42 L1804.26 748.42" fill="none" stroke="#88b074" stroke-width="1.6" stroke-linejoin="round"/>
<path d="M1116.50 946.56 L1181.28 946.56 L1215.89 744.82 L1250.50 744.82 L1285.11 744.82 L1319.72 744.82 L1354.33 736.15 L1388.94 736.15 L1423.55 736.15 L1458.16 736.15 L1492.77 735.22 L1527.38 735.22 L1561.99 735.22 L1596.60 735.22 L1631.21 735.22 L1665.82 735.22 L1700.43 735.22 L1735.04 735.22 L1769.65 726.02 L1804.26 726.02" fill="none" stroke="#7d1e15" stroke-width="1.6" stroke-linejoin="round"/>
<path d="M1116.50 942.56 L1181.28 942.56 L1215.89 724.15 L1250.50 724.15 L1285.11 724.15 L1319.72 724.15 L1354.33 710.28 L1388.94 710.28 L1423.55 710.28 L1458.16 710.28 L1492.77 715.22 L1527.38 715.22 L1561.99 715.22 L1596.60 715.22 L1631.21 711.75 L1665.82 711.75 L1700.43 711.75 L1735.04 711.75 L1769.65 703.61 L1804.26 703.61" fill="none" stroke="#4577bd" stroke-width="1.6" stroke-linejoin="round"/>
<path d="M1116.50 937.23 L1181.28 937.23 L1215.89 702.41 L1250.50 702.41 L1285.11 702.41 L1319.72 702.41 L1354.33 682.01 L1388.94 682.01 L1423.55 682.01 L1458.16 682.01 L1492.77 686.28 L1527.38 686.28 L1561.99 686.28 L1596.60 686.28 L1631.21 690.41 L1665.82 690.41 L1700.43 690.41 L1735.04 690.41 L1769.65 680.15 L1804.26 680.15" fill="none" stroke="#b3632f" stroke-width="1.6" stroke-linejoin="round"/>
<path d="M1116.50 932.56 L1181.28 932.56 L1215.89 675.88 L1250.50 675.88 L1285.11 675.88 L1319.72 675.88 L1354.33 654.41 L1388.94 654.41 L1423.55 654.41 L1458.16 654.41 L1492.77 659.48 L1527.38 659.48 L1561.99 659.48 L1596.60 659.48 L1631.21 669.08 L1665.82 669.08 L1700.43 669.08 L1735.04 669.08 L1769.65 659.48 L1804.26 659.48" fill="none" stroke="#d05a4a" stroke-width="1.6" stroke-linejoin="round"/>
<path d="M1116.50 928.56 L1181.28 928.56 L1215.89 651.88 L1250.50 651.88 L1285.11 651.88 L1319.72 651.88 L1354.33 632.01 L1388.94 632.01 L1423.55 632.01 L1458.16 632.01 L1492.77 632.68 L1527.38 632.68 L1561.99 632.68 L1596.60 632.68 L1631.21 640.54 L1665.82 640.54 L1700.43 640.54 L1735.04 640.54 L1769.65 638.14 L1804.26 638.14" fill="none" stroke="#574573" stroke-width="1.6" stroke-linejoin="round"/>
<path d="M1116.50 924.56 L1181.28 924.56 L1215.89 630.14 L1250.50 630.14 L1285.11 630.14 L1319.72 630.14 L1354.33 604.41 L1388.94 604.41 L1423.55 604.41 L1458.16 604.41 L1492.77 604.41 L1527.38 604.41 L1561.99 604.41 L1596.60 604.41 L1631.21 613.74 L1665.82 613.74 L1700.43 613.74 L1735.04 613.74 L1769.65 617.48 L1804.26 617.48" fill="none" stroke="#63255d" stroke-width="1.6" stroke-linejoin="round"/>
<path d="M1116.50 918.56 L1181.28 918.56 L1215.89 606.67 L1250.50 606.67 L1285.11 606.67 L1319.72 606.67 L1354.33 576.14 L1388.94 576.14 L1423.55 576.14 L1458.16 576.14 L1492.77 576.14 L1527.38 576.14 L1561.99 576.14 L1596.60 576.14 L1631.21 585.47 L1665.82 585.47 L1700.43 585.47 L1735.04 585.47 L1769.65 595.74 L1804.26 595.74" fill="none" stroke="#df884b" stroke-width="1.6" stroke-linejoin="round"/>
</g>
<line x1="1117.5" y1="507.2" x2="1804.3" y2="507.2" stroke="#5373cb" stroke-width="3" stroke-dasharray="24 26" clip-path="url(#c2)"/>
<rect x="2078.8" y="986.50" width="691.20" height="2.4" fill="#ebebeb"/>
<rect x="2078.8" y="887.04" width="691.20" height="2.4" fill="#ebebeb"/>
<rect x="2078.8" y="787.58" width="691.20" height="2.4" fill="#ebebeb"/>
<rect x="2078.8" y="688.12" width="691.20" height="2.4" fill="#ebebeb"/>
<rect x="2078.8" y="588.66" width="691.20" height="2.4" fill="#ebebeb"/>
<rect x="2078.8" y="489.20" width="691.20" height="2.4" fill="#ebebeb"/>
<rect x="2213.80" y="489.2" width="2.4" height="498.50" fill="#ebebeb"/>
<rect x="2352.55" y="489.2" width="2.4" height="498.50" fill="#ebebeb"/>
<rect x="2491.30" y="489.2" width="2.4" height="498.50" fill="#ebebeb"/>
<rect x="2630.05" y="489.2" width="2.4" height="498.50" fill="#ebebeb"/>
<rect x="2768.80" y="489.2" width="2.4" height="498.50" fill="#ebebeb"/>
<text transform="translate(2064.5 995.80) scale(0.903 1)" text-anchor="end" font-size="31" fill="#50555d">0 B</text>
<text transform="translate(2064.5 896.34) scale(0.903 1)" text-anchor="end" font-size="31" fill="#50555d">93.1 GiB</text>
<text transform="translate(2064.5 796.88) scale(0.903 1)" text-anchor="end" font-size="31" fill="#50555d">186 GiB</text>
<text transform="translate(2064.5 697.42) scale(0.903 1)" text-anchor="end" font-size="31" fill="#50555d">279 GiB</text>
<text transform="translate(2064.5 597.96) scale(0.903 1)" text-anchor="end" font-size="31" fill="#50555d">373 GiB</text>
<text transform="translate(2064.5 498.50) scale(0.903 1)" text-anchor="end" font-size="31" fill="#50555d">466 GiB</text>
<text transform="translate(2215.00 1029.8) scale(0.95 1)" text-anchor="middle" font-size="31" fill="#50555d">11:48</text>
<text transform="translate(2353.75 1029.8) scale(0.95 1)" text-anchor="middle" font-size="31" fill="#50555d">11:49</text>
<text transform="translate(2492.50 1029.8) scale(0.95 1)" text-anchor="middle" font-size="31" fill="#50555d">11:50</text>
<text transform="translate(2631.25 1029.8) scale(0.95 1)" text-anchor="middle" font-size="31" fill="#50555d">11:51</text>
<text transform="translate(2770.00 1029.8) scale(0.95 1)" text-anchor="middle" font-size="31" fill="#50555d">11:52</text>
<clipPath id="c3"><rect x="2078.8" y="485.4" width="691.20" height="504.30000000000007"/></clipPath>
<g clip-path="url(#c3)">
<path d="M2078.80 959.83 L2770.00 959.83 L2770.00 987.70 L2078.80 987.70 Z" fill="#88b074"/>
<path d="M2078.80 941.78 L2770.00 941.78 L2770.00 959.83 L2078.80 959.83 Z" fill="#e0b955"/>
<path d="M2078.80 923.73 L2770.00 923.73 L2770.00 941.78 L2078.80 941.78 Z" fill="#8acddc"/>
<path d="M2078.80 959.83 L2770.00 959.83" fill="none" stroke="#88b074" stroke-width="1.6" stroke-linejoin="round"/>
<path d="M2078.80 941.78 L2770.00 941.78" fill="none" stroke="#e0b955" stroke-width="1.6" stroke-linejoin="round"/>
<path d="M2078.80 923.73 L2770.00 923.73" fill="none" stroke="#8acddc" stroke-width="1.6" stroke-linejoin="round"/>
</g>
<line x1="2079.8" y1="522.7" x2="2770" y2="522.7" stroke="#5373cb" stroke-width="3" stroke-dasharray="24 26" clip-path="url(#c3)"/>
</g></svg>
<div style="position:absolute;top:1062.06px;font-size:33px;line-height:33px;color:#58a0df;white-space:nowrap;font-weight:400;-webkit-text-stroke:1.0px #58a0df;right:2046.30px;transform-origin:100% 0;transform:scaleX(0.909);letter-spacing:0.25px;">current</div>
<svg style="position:absolute;left:848px;top:1070px" width="20" height="20" viewBox="0 0 20 20"><path d="M1.9 6 L9.8 13.6 L17.7 6" stroke="#58a0df" stroke-width="2.6" fill="none"/></svg>
<div style="position:absolute;left:28px;top:1105px;width:859.50px;height:249px;overflow:hidden">
<div style="position:absolute;left:13.50px;top:68.80px;width:846.00px;height:64.20px;background:#f7f7f8"></div>
<div style="position:absolute;left:13.50px;top:198.90px;width:846.00px;height:66.10px;background:#f7f7f8"></div>
<div style="position:absolute;left:20.00px;top:32.80px;width:34px;height:10px;border-radius:2px;background:#3d5ec4"></div>
<div style="position:absolute;left:79.30px;top:19.33px;font-size:31.5px;line-height:31.5px;color:#52575f;white-space:nowrap;transform-origin:0 0;transform:scaleX(0.9143)">MAX</div>
<div style="position:absolute;left:569.00px;width:300px;text-align:right;top:19.33px;font-size:31.5px;line-height:31.5px;color:#52575f;white-space:nowrap;transform-origin:100% 0;transform:scaleX(0.9143)">16 GPUs</div>
<div style="position:absolute;left:20.00px;top:99.00px;width:34px;height:10px;border-radius:2px;background:#c4a03c"></div>
<div style="position:absolute;left:79.30px;top:84.63px;font-size:31.5px;line-height:31.5px;color:#52575f;white-space:nowrap;transform-origin:0 0;transform:scaleX(0.9143)">GPU Usage: 10.0.29.65, gpu.4, NVIDIA A10G</div>
<div style="position:absolute;left:569.00px;width:300px;text-align:right;top:84.63px;font-size:31.5px;line-height:31.5px;color:#52575f;white-space:nowrap;transform-origin:100% 0;transform:scaleX(0.9143)">1 GPUs</div>
<div style="position:absolute;left:20.00px;top:163.20px;width:34px;height:10px;border-radius:2px;background:#4577bd"></div>
<div style="position:absolute;left:79.30px;top:148.93px;font-size:31.5px;line-height:31.5px;color:#52575f;white-space:nowrap;transform-origin:0 0;transform:scaleX(0.9143)">GPU Usage: 10.0.29.65, gpu.2, NVIDIA A10G</div>
<div style="position:absolute;left:569.00px;width:300px;text-align:right;top:148.93px;font-size:31.5px;line-height:31.5px;color:#52575f;white-space:nowrap;transform-origin:100% 0;transform:scaleX(0.9143)">1 GPUs</div>
<div style="position:absolute;left:20.00px;top:229.00px;width:34px;height:10px;border-radius:2px;background:#df884b"></div>
<div style="position:absolute;left:79.30px;top:214.53px;font-size:31.5px;line-height:31.5px;color:#52575f;white-space:nowrap;transform-origin:0 0;transform:scaleX(0.9143)">GPU Usage: 10.0.29.65, gpu.1, NVIDIA A10G</div>
<div style="position:absolute;left:569.00px;width:300px;text-align:right;top:214.53px;font-size:31.5px;line-height:31.5px;color:#52575f;white-space:nowrap;transform-origin:100% 0;transform:scaleX(0.9143)">1 GPUs</div>
</div>
<div style="position:absolute;top:1062.06px;font-size:33px;line-height:33px;color:#58a0df;white-space:nowrap;font-weight:400;-webkit-text-stroke:1.0px #58a0df;right:1110.90px;transform-origin:100% 0;transform:scaleX(0.909);letter-spacing:0.25px;">current</div>
<svg style="position:absolute;left:1783.4px;top:1070px" width="20" height="20" viewBox="0 0 20 20"><path d="M1.9 6 L9.8 13.6 L17.7 6" stroke="#58a0df" stroke-width="2.6" fill="none"/></svg>
<div style="position:absolute;left:990px;top:1105px;width:848.00px;height:249px;overflow:hidden">
<div style="position:absolute;left:13.50px;top:68.80px;width:834.50px;height:64.20px;background:#f7f7f8"></div>
<div style="position:absolute;left:13.50px;top:198.90px;width:834.50px;height:66.10px;background:#f7f7f8"></div>
<div style="position:absolute;left:20.00px;top:32.80px;width:34px;height:10px;border-radius:2px;background:#3d5ec4"></div>
<div style="position:absolute;left:79.30px;top:19.33px;font-size:31.5px;line-height:31.5px;color:#52575f;white-space:nowrap;transform-origin:0 0;transform:scaleX(0.9143)">MAX</div>
<div style="position:absolute;left:542.40px;width:300px;text-align:right;top:19.33px;font-size:31.5px;line-height:31.5px;color:#52575f;white-space:nowrap;transform-origin:100% 0;transform:scaleX(0.9143)">360 GiB</div>
<div style="position:absolute;left:20.00px;top:99.00px;width:34px;height:10px;border-radius:2px;background:#8acddc"></div>
<div style="position:absolute;left:79.30px;top:84.63px;font-size:31.5px;line-height:31.5px;color:#52575f;white-space:nowrap;transform-origin:0 0;transform:scaleX(0.9143)">Used GRAM: 10.0.12.39, gpu.1, NVIDIA A10G</div>
<div style="position:absolute;left:542.40px;width:300px;text-align:right;top:84.63px;font-size:31.5px;line-height:31.5px;color:#52575f;white-space:nowrap;transform-origin:100% 0;transform:scaleX(0.9143)">22.0 GiB</div>
<div style="position:absolute;left:20.00px;top:163.20px;width:34px;height:10px;border-radius:2px;background:#5580b8"></div>
<div style="position:absolute;left:79.30px;top:148.93px;font-size:31.5px;line-height:31.5px;color:#52575f;white-space:nowrap;transform-origin:0 0;transform:scaleX(0.9143)">Used GRAM: 10.0.12.39, gpu.5, NVIDIA A10G</div>
<div style="position:absolute;left:542.40px;width:300px;text-align:right;top:148.93px;font-size:31.5px;line-height:31.5px;color:#52575f;white-space:nowrap;transform-origin:100% 0;transform:scaleX(0.9143)">21.5 GiB</div>
<div style="position:absolute;left:20.00px;top:229.00px;width:34px;height:10px;border-radius:2px;background:#aa4ea0"></div>
<div style="position:absolute;left:79.30px;top:214.53px;font-size:31.5px;line-height:31.5px;color:#52575f;white-space:nowrap;transform-origin:0 0;transform:scaleX(0.9143)">Used GRAM: 10.0.12.39, gpu.3, NVIDIA A10G</div>
<div style="position:absolute;left:542.40px;width:300px;text-align:right;top:214.53px;font-size:31.5px;line-height:31.5px;color:#52575f;white-space:nowrap;transform-origin:100% 0;transform:scaleX(0.9143)">21.0 GiB</div>
</div>
<div style="position:absolute;top:1062.06px;font-size:33px;line-height:33px;color:#58a0df;white-space:nowrap;font-weight:400;-webkit-text-stroke:1.0px #58a0df;right:148.30px;transform-origin:100% 0;transform:scaleX(0.909);letter-spacing:0.25px;">current</div>
<svg style="position:absolute;left:2746px;top:1070px" width="20" height="20" viewBox="0 0 20 20"><path d="M1.9 6 L9.8 13.6 L17.7 6" stroke="#58a0df" stroke-width="2.6" fill="none"/></svg>
<div style="position:absolute;left:1952px;top:1105px;width:847.50px;height:249px;overflow:hidden">
<div style="position:absolute;left:13.50px;top:68.80px;width:834.00px;height:64.20px;background:#f7f7f8"></div>
<div style="position:absolute;left:13.50px;top:198.90px;width:834.00px;height:66.10px;background:#f7f7f8"></div>
<div style="position:absolute;left:20.00px;top:32.80px;width:34px;height:10px;border-radius:2px;background:#3d5ec4"></div>
<div style="position:absolute;left:79.30px;top:19.33px;font-size:31.5px;line-height:31.5px;color:#52575f;white-space:nowrap;transform-origin:0 0;transform:scaleX(0.9143)">MAX</div>
<div style="position:absolute;left:543.00px;width:300px;text-align:right;top:19.33px;font-size:31.5px;line-height:31.5px;color:#52575f;white-space:nowrap;transform-origin:100% 0;transform:scaleX(0.9143)">436 GiB</div>
<div style="position:absolute;left:20.00px;top:99.00px;width:34px;height:10px;border-radius:2px;background:#88b074"></div>
<div style="position:absolute;left:79.30px;top:84.63px;font-size:31.5px;line-height:31.5px;color:#52575f;white-space:nowrap;transform-origin:0 0;transform:scaleX(0.9143)">Disk Used: 10.0.3.43</div>
<div style="position:absolute;left:543.00px;width:300px;text-align:right;top:84.63px;font-size:31.5px;line-height:31.5px;color:#52575f;white-space:nowrap;transform-origin:100% 0;transform:scaleX(0.9143)">26.1 GiB</div>
<div style="position:absolute;left:20.00px;top:163.20px;width:34px;height:10px;border-radius:2px;background:#e0b955"></div>
<div style="position:absolute;left:79.30px;top:148.93px;font-size:31.5px;line-height:31.5px;color:#52575f;white-space:nowrap;transform-origin:0 0;transform:scaleX(0.9143)">Disk Used: 10.0.12.39</div>
<div style="position:absolute;left:543.00px;width:300px;text-align:right;top:148.93px;font-size:31.5px;line-height:31.5px;color:#52575f;white-space:nowrap;transform-origin:100% 0;transform:scaleX(0.9143)">16.9 GiB</div>
<div style="position:absolute;left:20.00px;top:229.00px;width:34px;height:10px;border-radius:2px;background:#8acddc"></div>
<div style="position:absolute;left:79.30px;top:214.53px;font-size:31.5px;line-height:31.5px;color:#52575f;white-space:nowrap;transform-origin:0 0;transform:scaleX(0.9143)">Disk Used: 10.0.29.65</div>
<div style="position:absolute;left:543.00px;width:300px;text-align:right;top:214.53px;font-size:31.5px;line-height:31.5px;color:#52575f;white-space:nowrap;transform-origin:100% 0;transform:scaleX(0.9143)">16.9 GiB</div>
</div>
</body></html>
